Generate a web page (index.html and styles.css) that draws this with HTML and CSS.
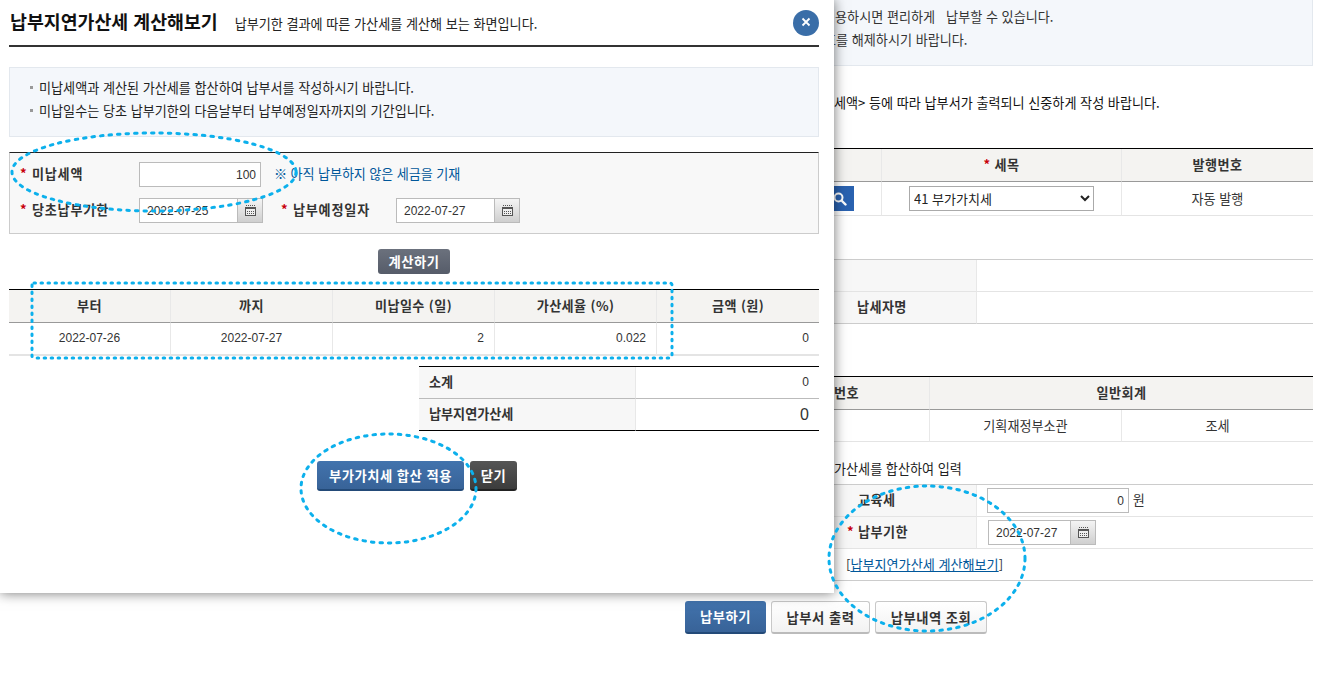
FILE: index.html
```html
<!DOCTYPE html>
<html lang="ko">
<head>
    <meta charset="UTF-8">
    <title>납부지연가산세 계산해보기</title>
    <link rel="stylesheet" href="styles.css">
</head>
<body>

    <!-- page behind the popup -->
    <div class="page">
        <div class="notice">
            <p class="notice-one">이용하시면 편리하게 &nbsp;&nbsp;납부할 수 있습니다.</p>
            <p class="notice-two">호를 해제하시기 바랍니다.</p>
        </div>
        <p class="guide">세액&gt; 등에 따라 납부서가 출력되니 신중하게 작성 바랍니다.</p>

        <table class="grid tax-table">
            <colgroup><col class="c525"><col class="c240"><col></colgroup>
            <tr>
                <th></th>
                <th><span class="star">*</span> 세목</th>
                <th>발행번호</th>
            </tr>
            <tr>
                <td class="search-cell">
                    <button class="search-btn">
                        <svg width="14" height="14" viewBox="0 0 14 14"><circle cx="5.5" cy="5.5" r="4" fill="none" stroke="#fff" stroke-width="2"/><path d="M8.5 8.5l4 4" stroke="#fff" stroke-width="2.4" stroke-linecap="round"/></svg>
                    </button>
                </td>
                <td>
                    <select class="tax-select"><option>41 부가가치세</option></select>
                </td>
                <td>자동 발행</td>
            </tr>
        </table>

        <table class="grid form-table payer-table">
            <colgroup><col class="c621"><col></colgroup>
            <tr><th></th><td></td></tr>
            <tr><th class="payer-name">납세자명</th><td></td></tr>
        </table>

        <table class="grid account-table">
            <colgroup><col class="c573"><col class="c192"><col></colgroup>
            <tr>
                <th class="account-no">번호</th>
                <th colspan="2">일반회계</th>
            </tr>
            <tr>
                <td></td>
                <td>기획재정부소관</td>
                <td>조세</td>
            </tr>
        </table>

        <p class="sum-note">가산세를 합산하여 입력</p>

        <table class="grid form-table pay-table">
            <colgroup><col class="c621"><col></colgroup>
            <tr>
                <th class="pay-label">교육세</th>
                <td class="pay-field">
                    <input class="field edu-input num" type="text" value="0"> 원
                </td>
            </tr>
            <tr>
                <th class="pay-label"><span class="star star-out">*</span>납부기한</th>
                <td class="pay-field">
                    <div class="date-field pay-date">
                        <input class="field date-input num" type="text" value="2022-07-27">
                        <button class="cal-btn"><svg width="11" height="11" viewBox="0 0 11 11"><use href="#cal"/></svg></button>
                    </div>
                </td>
            </tr>
            <tr>
                <td colspan="2" class="link-cell">[<a href="#">납부지연가산세 계산해보기</a>]</td>
            </tr>
        </table>

        <div class="page-actions">
            <button class="btn btn-blue btn-lg pay-now">납부하기</button>
            <button class="btn btn-white btn-lg print-btn">납부서 출력</button>
            <button class="btn btn-white btn-lg history-btn">납부내역 조회</button>
        </div>
    </div>

    <!-- popup -->
    <div class="modal">
        <div class="modal-head">
            <h1>납부지연가산세 계산해보기</h1>
            <span class="modal-desc">납부기한 결과에 따른 가산세를 계산해 보는 화면입니다.</span>
            <button class="close-btn">
                <svg width="10" height="10" viewBox="0 0 10 10"><path d="M1.5 1.5l7 7M8.5 1.5l-7 7" stroke="#fff" stroke-width="1.8"/></svg>
            </button>
        </div>

        <ul class="info-box">
            <li>미납세액과 계산된 가산세를 합산하여 납부서를 작성하시기 바랍니다.</li>
            <li>미납일수는 당초 납부기한의 다음날부터 납부예정일자까지의 기간입니다.</li>
        </ul>

        <div class="calc-form">
            <div class="calc-row">
                <label class="calc-label"><span class="star">*</span> 미납세액</label>
                <input class="field amount-input num" type="text" value="100">
                <span class="calc-note">※ 아직 납부하지 않은 세금을 기재</span>
            </div>
            <div class="calc-row">
                <label class="calc-label"><span class="star">*</span> 당초납부기한</label>
                <div class="date-field">
                    <input class="field date-input num" type="text" value="2022-07-25">
                    <button class="cal-btn"><svg width="11" height="11" viewBox="0 0 11 11"><use href="#cal"/></svg></button>
                </div>
                <label class="calc-label label-second"><span class="star">*</span> 납부예정일자</label>
                <div class="date-field">
                    <input class="field date-input num" type="text" value="2022-07-27">
                    <button class="cal-btn"><svg width="11" height="11" viewBox="0 0 11 11"><use href="#cal"/></svg></button>
                </div>
            </div>
        </div>

        <div class="calc-action">
            <button class="btn btn-gray">계산하기</button>
        </div>

        <table class="grid result-table">
            <colgroup><col class="c161"><col class="c162"><col class="c162"><col class="c162"><col></colgroup>
            <tr>
                <th>부터</th>
                <th>까지</th>
                <th>미납일수 (일)</th>
                <th>가산세율 (%)</th>
                <th>금액 (원)</th>
            </tr>
            <tr>
                <td class="num">2022-07-26</td>
                <td class="num">2022-07-27</td>
                <td class="num right">2</td>
                <td class="num right">0.022</td>
                <td class="num right">0</td>
            </tr>
        </table>

        <table class="grid total-table">
            <colgroup><col class="c216"><col></colgroup>
            <tr>
                <th>소계</th>
                <td class="num right">0</td>
            </tr>
            <tr>
                <th>납부지연가산세</th>
                <td class="num right total-sum">0</td>
            </tr>
        </table>

        <div class="modal-actions">
            <button class="btn btn-blue apply-btn">부가가치세 합산 적용</button>
            <button class="btn btn-dark close-text">닫기</button>
        </div>
    </div>

    <!-- hand drawn marks on the screenshot -->
    <svg class="marks" width="1328" height="679" viewBox="0 0 1328 679">
        <defs>
            <g id="cal">
                <path d="M1 .5h9" stroke="#555" stroke-dasharray="1 1"/>
                <rect x=".5" y="3.5" width="10" height="7" fill="#eee" stroke="#555"/>
                <rect x="0" y="2" width="11" height="2" fill="#555"/>
                <path d="M2 6.5h7M2 8.5h7" stroke="#555" stroke-dasharray="1 1"/>
            </g>
        </defs>
        <ellipse class="mark" cx="154" cy="172" rx="142" ry="39"/>
        <rect class="mark mark-box" x="32" y="283" width="640" height="75" rx="2"/>
        <ellipse class="mark" cx="388.5" cy="488.5" rx="87.5" ry="54.5"/>
        <ellipse class="mark" cx="927" cy="558.5" rx="98" ry="72.5"/>
    </svg>

</body>
</html>
```

FILE: styles.css
```css
* {
    box-sizing: border-box;
}

html, body {
    height: 679px;
    overflow: hidden;
}

body {
    margin: 0;
    position: relative;
    font-family: "Noto Sans CJK KR", "Noto Sans", sans-serif;
    font-size: 13.1px;
    line-height: 23px;
    color: #333;
    background-color: #fff;
}

p, ul, h1 {
    margin: 0;
    padding: 0;
}

.num {
    font-family: "Liberation Sans", Arial, sans-serif;
    font-size: 12px;
}

.right {
    text-align: right;
}

.star {
    color: #c8000a;
    font-weight: 700;
}

/* tables */
.grid {
    width: 100%;
    table-layout: fixed;
    border-collapse: separate;
    border-spacing: 0;
}

.grid th, .grid td {
    padding: 0;
    text-align: center;
    border-bottom: 1px solid #e4e4e4;
    border-left: 1px solid #e8e8e8;
}

.grid th:first-child, .grid td:first-child {
    border-left: none;
}

.grid th {
    height: 33px;
    padding-bottom: 2px;
    font-weight: 700;
    letter-spacing: 0.4px;
    color: #333;
    background-color: #f4f3f1;
    border-bottom-color: #999;
}

.grid .right {
    text-align: right;
    padding-right: 10px;
}

.c525 { width: 525px; }
.c240 { width: 240px; }
.c621 { width: 621px; }
.c573 { width: 573px; }
.c192 { width: 192px; }
.c216 { width: 216px; }
.c161 { width: 161px; }
.c162 { width: 162px; }

/* background page */
.page {
    width: 957px;
    margin-left: 356px;
}

.notice {
    height: 66px;
    padding-top: 5px;
    background-color: #f4f7fb;
    border-right: 1px solid #e3e8ee;
    border-bottom: 1px solid #e3e8ee;
}

.notice-one {
    padding-left: 467px;
}

.notice-two {
    padding-left: 468px;
}

.guide {
    margin-top: 25px;
    padding-left: 478px;
    color: #111;
}

.tax-table {
    margin-top: 34px;
    border-top: 1px solid #000;
}

.tax-table td {
    height: 34px;
}

.grid .search-cell {
    text-align: right;
    padding-right: 27px;
}

.search-btn {
    width: 24px;
    height: 25px;
    padding: 3px 4px 0 0;
    border: none;
    background-color: #2a62b0;
    vertical-align: middle;
}

.tax-select {
    width: 185px;
    height: 25px;
    border: 1px solid #aaa;
    background-color: #fff;
    font-family: "Noto Sans CJK KR", sans-serif;
    font-size: 13px;
    color: #222;
    vertical-align: middle;
}

.form-table {
    border-top: 1px solid #ccc;
}

.form-table th {
    height: 32px;
    background-color: #f7f7f7;
    border-bottom-color: #e4e4e4;
    border-right: 1px solid #e8e8e8;
}

.form-table td {
    height: 32px;
    border-left: none;
}

.payer-table {
    margin-top: 43px;
}

.payer-table tr:last-child th, .payer-table tr:last-child td {
    border-bottom-color: #ccc;
}

.grid .payer-name {
    text-align: left;
    padding-left: 501px;
}

.account-table {
    margin-top: 52px;
    border-top: 1px solid #000;
}

.account-table td {
    height: 32px;
}

.grid .account-no {
    text-align: left;
    padding-left: 478px;
}

.sum-note {
    margin-top: 15px;
    margin-bottom: 3px;
    padding-left: 478px;
    line-height: 24px;
    color: #222;
}

.grid .pay-label {
    text-align: left;
    padding-left: 502px;
}

.star-out {
    margin-left: -11px;
    margin-right: 4px;
}

.grid .pay-field {
    text-align: left;
    padding-left: 10px;
}

.edu-input {
    width: 142px;
    height: 24px;
    vertical-align: middle;
}

.pay-date {
    margin-left: 1px;
    vertical-align: middle;
}

.pay-date .date-input {
    width: 83px;
}

.grid .link-cell {
    text-align: left;
    padding-left: 490px;
    border-bottom-color: #ccc;
}

.link-cell a {
    color: #00579a;
}

.page-actions {
    display: flex;
    justify-content: center;
    gap: 5px;
    margin-top: 20px;
    padding-left: 3px;
}

/* form controls */
.field {
    height: 25px;
    padding: 0 7px;
    border: 1px solid #bbb;
    background-color: #fff;
    color: #333;
    outline: none;
}

.edu-input, .amount-input {
    padding-right: 4px;
    text-align: right;
}

.date-field {
    display: inline-flex;
}

.date-input {
    width: 99px;
}

.cal-btn {
    width: 25px;
    height: 25px;
    padding: 2px 0 0;
    border: 1px solid #bbb;
    border-left: none;
    background: linear-gradient(#f4f4f4, #cfcfcf);
}

.btn {
    height: 30px;
    padding: 0;
    border: none;
    border-radius: 3px;
    font-family: inherit;
    font-size: 13.3px;
    font-weight: 700;
    letter-spacing: 0.5px;
    color: #fff;
}

.btn-lg {
    height: 33px;
}

.btn-blue {
    background: linear-gradient(#4273ad, #386398);
    border-bottom: 2px solid #234a78;
}

.btn-dark {
    background: linear-gradient(#555, #3c3c3c);
    border-bottom: 2px solid #222;
}

.btn-gray {
    width: 72px;
    height: 25px;
    background: linear-gradient(#6b717d, #565c69);
}

.btn-white {
    color: #333;
    background: linear-gradient(#fff, #f2f2f2);
    border: 1px solid #c8c8c8;
    border-bottom: 2px solid #bbb;
}

.pay-now { width: 81px; }
.print-btn { width: 99px; }
.history-btn { width: 112px; }
.apply-btn { width: 147px; }
.close-text { width: 47px; }

/* popup */
.modal {
    position: absolute;
    left: 0;
    top: 0;
    width: 834px;
    height: 593px;
    padding: 0 15px 0 9px;
    background-color: #fff;
    box-shadow: 0 0 12px rgba(0, 0, 0, 0.55);
}

.modal-head {
    display: flex;
    align-items: center;
    height: 47px;
    padding-left: 1px;
    border-bottom: 2px solid #333;
}

.modal-head h1 {
    margin-bottom: 2px;
    font-size: 18.35px;
    font-weight: 700;
    color: #111;
}

.modal-desc {
    margin-left: 17px;
    margin-top: 1px;
    color: #222;
}

.close-btn {
    width: 26px;
    height: 26px;
    margin-left: auto;
    padding: 0;
    border: none;
    border-radius: 50%;
    background-color: #3a6ea8;
}

.info-box {
    height: 70px;
    margin-top: 20px;
    padding: 8px 0 0 29px;
    list-style: none;
    color: #222;
    background-color: #f4f7fb;
    border: 1px solid #e3e8ee;
}

.info-box li {
    position: relative;
}

.info-box li::before {
    content: "";
    position: absolute;
    left: -9px;
    top: 10px;
    width: 3px;
    height: 3px;
    background-color: #999;
}

.calc-form {
    height: 82px;
    margin-top: 15px;
    padding: 9px 0 0 10px;
    background-color: #f8f8f8;
    border: 1px solid #ccc;
    border-top-color: #222;
}

.calc-row {
    display: flex;
    align-items: center;
    height: 25px;
    margin-bottom: 11px;
}

.calc-label {
    width: 119px;
    padding-bottom: 2px;
    font-weight: 700;
    letter-spacing: 0.8px;
    color: #333;
}

.label-second {
    width: 115px;
    margin-left: 18px;
}

.amount-input {
    width: 122px;
}

.calc-note {
    margin-left: 13px;
    padding-bottom: 2px;
    letter-spacing: -0.1px;
    color: #00579a;
}

.calc-action {
    display: flex;
    justify-content: center;
    margin-top: 15px;
}

.result-table {
    margin-top: 15px;
    border-top: 1px solid #000;
}

.result-table td {
    height: 33px;
    border-bottom: 2px solid #e4e4e4;
}

.total-table {
    width: 400px;
    margin-top: 10px;
    margin-left: auto;
    border-top: 1px solid #000;
}

.total-table th, .total-table td {
    height: 32px;
    border-bottom-color: #bbb;
}

.total-table th {
    text-align: left;
    padding-left: 10px;
    letter-spacing: 0;
    background-color: #f7f7f7;
}

.total-table tr:last-child th, .total-table tr:last-child td {
    border-bottom-color: #000;
}

.grid .total-sum {
    font-size: 16px;
}

.modal-actions {
    display: flex;
    justify-content: center;
    gap: 6px;
    margin-top: 30px;
    padding-left: 6px;
}

/* dotted marks */
.marks {
    position: absolute;
    left: 0;
    top: 0;
    pointer-events: none;
}

.mark {
    fill: none;
    stroke: #0cb0ec;
    stroke-width: 3;
    stroke-linecap: round;
    stroke-dasharray: 2.5 6;
}

.mark-box {
    stroke-dasharray: 1.5 5.5;
}
```
